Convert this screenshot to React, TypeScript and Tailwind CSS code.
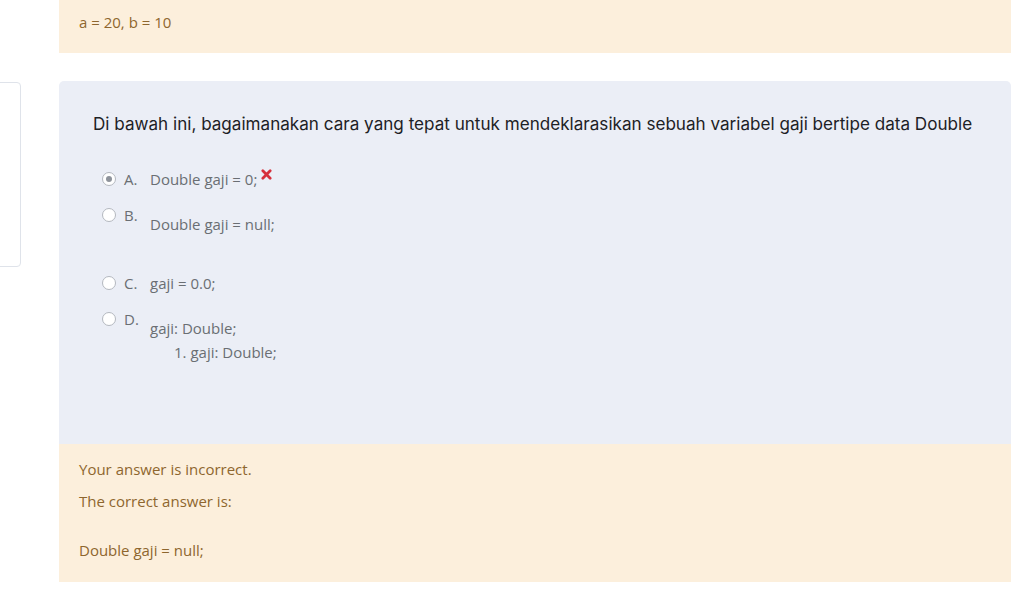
import type { ReactNode } from 'react'

const sans = '"Open Sans", "Liberation Sans", sans-serif'
const heading = 'Inter, "Noto Sans", sans-serif'

function Radio({ checked }: { checked?: boolean }) {
  return (
    <span className="mt-[4px] flex h-[14px] w-[14px] shrink-0 items-center justify-center rounded-full border-[1.5px] border-[#b4b8bf] bg-white">
      {checked && <span className="h-[6px] w-[6px] rounded-full bg-[#8e939b]" />}
    </span>
  )
}

function Cross() {
  return (
    <svg viewBox="0 0 12 12" className="ml-[4px] mt-[1px] h-[11px] w-[11px] shrink-0" aria-hidden>
      <path d="M2 2 L10 10 M10 2 L2 10" stroke="#d6303c" strokeWidth="3" strokeLinecap="round" />
    </svg>
  )
}

function Option({
  letter,
  checked,
  shift,
  className,
  children,
}: {
  letter: string
  checked?: boolean
  shift?: boolean
  className?: string
  children: ReactNode
}) {
  return (
    <div className={`flex items-start text-[15px] leading-[22px] text-[#6a6e73] ${className || ''}`}>
      <Radio checked={checked} />
      <span className="ml-[8px] w-[26px] shrink-0">{letter}</span>
      <div className={shift ? 'pt-[9px]' : ''}>{children}</div>
    </div>
  )
}

export default function App() {
  return (
    <div className="min-h-[597px] w-[1027px] overflow-hidden bg-white" style={{ fontFamily: sans }}>
      <div className="flex">
        <div className="w-[59px] shrink-0" />
        <div className="-mt-[27px] w-[952px] bg-[#fcefdc] px-[20px] pb-[20px] text-[15px] leading-[22px] text-[#8e662e]">
          <p className="mb-[16px]">The correct answer is:</p>
          <p>a = 20, b = 10</p>
        </div>
      </div>

      <div className="mt-[28px] flex">
        <div className="w-[59px] shrink-0 pt-[1px]">
          <div className="-ml-[12px] h-[185px] w-[33px] rounded-[4px] border border-[#dfe3ea] bg-white" />
        </div>
        <div className="w-[952px]">
          <div className="h-[363px] rounded-t-[5px] bg-[#ebeef6] px-[34px] pt-[30px]">
            <p className="text-[17.1px] leading-[26px] text-[#1d2125]" style={{ fontFamily: heading }}>
              Di bawah ini, bagaimanakan cara yang tepat untuk mendeklarasikan sebuah variabel gaji bertipe data Double
            </p>
            <div className="mt-[31px] pl-[9px]">
              <Option letter="A." checked>
                <span className="flex items-start">
                  Double gaji = 0;
                  <Cross />
                </span>
              </Option>
              <Option letter="B." shift className="mt-[14px]">
                Double gaji = null;
              </Option>
              <Option letter="C." className="mt-[37px]">
                gaji = 0.0;
              </Option>
              <Option letter="D." shift className="mt-[14px]">
                <p>gaji: Double;</p>
                <p className="mt-[2px] pl-[24px]">1. gaji: Double;</p>
              </Option>
            </div>
          </div>
          <div className="bg-[#fcefdc] px-[20px] pb-[21px] pt-[14px] text-[15px] leading-[22px] text-[#8e662e]">
            <p className="mb-[10px]">Your answer is incorrect.</p>
            <p className="mb-[27px]">The correct answer is:</p>
            <p>Double gaji = null;</p>
          </div>
        </div>
      </div>
    </div>
  )
}
